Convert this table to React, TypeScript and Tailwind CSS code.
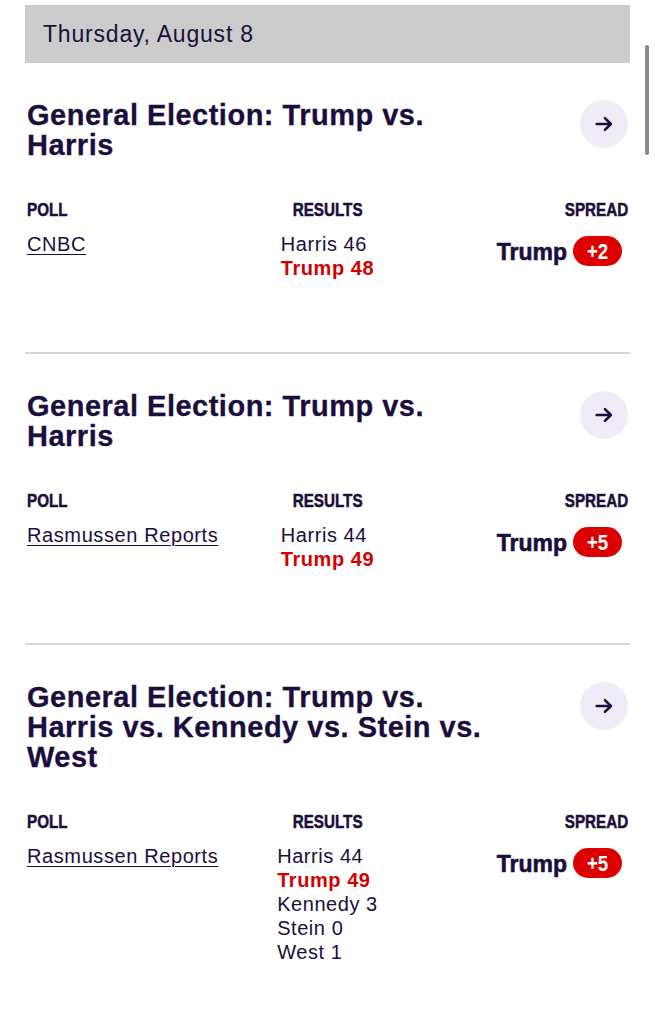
import React from "react";

interface Poll {
  title: string[];
  poll: string;
  results: { name: string; value: number; leader?: boolean }[];
  spreadName: string;
  spread: string;
}

const polls: Poll[] = [
  {
    title: ["General Election: Trump vs.", "Harris"],
    poll: "CNBC",
    results: [
      { name: "Harris", value: 46 },
      { name: "Trump", value: 48, leader: true },
    ],
    spreadName: "Trump",
    spread: "+2",
  },
  {
    title: ["General Election: Trump vs.", "Harris"],
    poll: "Rasmussen Reports",
    results: [
      { name: "Harris", value: 44 },
      { name: "Trump", value: 49, leader: true },
    ],
    spreadName: "Trump",
    spread: "+5",
  },
  {
    title: ["General Election: Trump vs.", "Harris vs. Kennedy vs. Stein vs.", "West"],
    poll: "Rasmussen Reports",
    results: [
      { name: "Harris", value: 44 },
      { name: "Trump", value: 49, leader: true },
      { name: "Kennedy", value: 3 },
      { name: "Stein", value: 0 },
      { name: "West", value: 1 },
    ],
    spreadName: "Trump",
    spread: "+5",
  },
];

const ArrowIcon = () => (
  <svg width="22" height="22" viewBox="0 0 24 24" fill="none" stroke="#1b0e3c" strokeWidth="2.8" strokeLinecap="round" strokeLinejoin="round">
    <path d="M4 12h15" />
    <path d="M13 5.5l6.5 6.5-6.5 6.5" />
  </svg>
);

const PollCard = ({ p, last }: { p: Poll; last: boolean }) => {
  return (
    <div className={`pt-[37px] ${last ? "pb-[40px]" : "pb-[72px] border-b-2 border-[#d6d6d6]"}`}>
      <div className="flex justify-between items-start px-[2px]">
        <h2 className="text-[29px] leading-[30px] font-bold tracking-[0.5px] [-webkit-text-stroke:0.3px_#1b0e3c]">
          {p.title.map((t, i) => (
            <div key={i}>{t}</div>
          ))}
        </h2>
        <button className="w-[48px] h-[48px] rounded-full bg-[#efecf8] flex items-center justify-center shrink-0">
          <ArrowIcon />
        </button>
      </div>

      <div className="grid grid-cols-3 mt-[38px] px-[2px]">
        <div className="font-bold text-[19px] leading-[24px] [-webkit-text-stroke:0.5px_#1b0e3c]">
          <span className="inline-block origin-left scale-x-[0.8]">POLL</span>
        </div>
        <div className="font-bold text-[19px] leading-[24px] text-center [-webkit-text-stroke:0.5px_#1b0e3c]">
          <span className="inline-block origin-center scale-x-[0.8]">RESULTS</span>
        </div>
        <div className="font-bold text-[19px] leading-[24px] text-right [-webkit-text-stroke:0.5px_#1b0e3c]">
          <span className="inline-block origin-right scale-x-[0.8]">SPREAD</span>
        </div>

        <div className="mt-[10px] self-start">
          <a className="underline text-[20px] leading-[24px] tracking-[0.6px] underline-offset-[3px] decoration-1">{p.poll}</a>
        </div>
        <div className="mt-[10px] flex justify-center self-start">
          <div className="flex flex-col">
            {p.results.map((r) => (
              <div
                key={r.name}
                className={`text-[20px] leading-[24px] tracking-[0.55px] ${r.leader ? "font-bold text-[#d40000]" : ""}`}
              >
                {r.name} {r.value}
              </div>
            ))}
          </div>
        </div>
        <div className="mt-[14px] self-start flex justify-end items-center gap-[6px] pr-[6px]">
          <span className="font-bold text-[23px] leading-[30px] [-webkit-text-stroke:0.6px_#1b0e3c]">
            <span className="inline-block origin-right scale-y-[1.08]">{p.spreadName}</span>
          </span>
          <span className="font-bold bg-[#dc0000] text-white rounded-full w-[49px] h-[30px] flex items-center justify-center text-[22px]">
            <span className="inline-block scale-x-[0.85]">{p.spread}</span>
          </span>
        </div>
      </div>
    </div>
  );
};

export default function App() {
  return (
    <div className="w-[655px] min-h-[1024px] bg-white relative font-['Liberation_Sans',Arial,sans-serif] text-[#1b0e3c]">
      <div className="absolute right-[6px] top-[45px] w-[4px] h-[110px] rounded-full bg-[#8a8a8a]" />
      <div className="mx-[25px] pt-[5px]">
        <div className="h-[58px] bg-[#cccccc] flex items-center pl-[18px] text-[23px] tracking-[0.8px]">Thursday, August 8</div>
        {polls.map((p, i) => (
          <PollCard key={i} p={p} last={i === polls.length - 1} />
        ))}
      </div>
    </div>
  );
}
